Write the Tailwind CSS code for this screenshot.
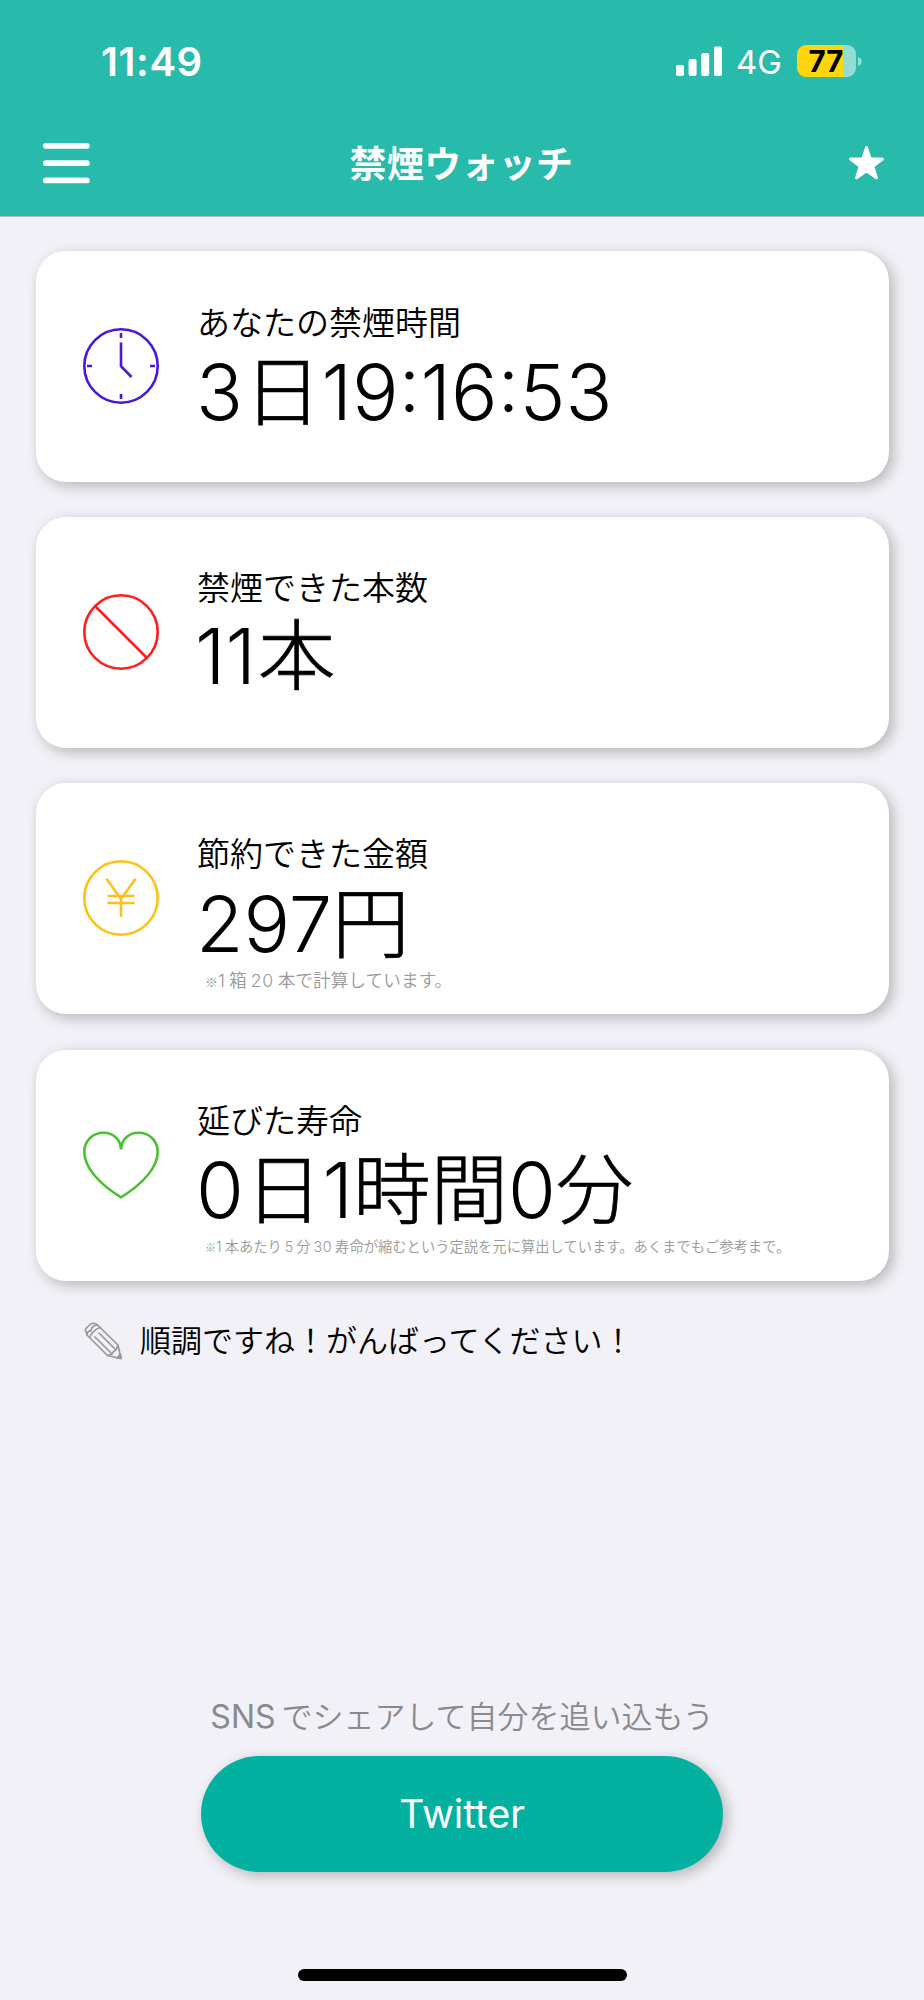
<!DOCTYPE html>
<html lang="ja">
<head>
<meta charset="utf-8">
<title>禁煙ウォッチ</title>
<script src="https://cdn.jsdelivr.net/npm/@tailwindcss/browser@4"></script>
</head>
<body class="w-[924px] h-[2000px] bg-[#f2f1f7] flex flex-col overflow-hidden text-black font-['Inter','Noto_Sans_CJK_JP',sans-serif]">
<header class="h-[217px] shrink-0 bg-[#28baab] border-b border-[#b5b9be] flex flex-col text-white">
  <div class="h-[120px] pl-[101px] pr-[62px] pt-[36px] flex items-start justify-between">
    <span class="text-[40px] leading-[52px] font-semibold tracking-[0.6px]">11:49</span>
    <div class="flex items-start">
      <svg class="w-[46px] h-[30px] mt-[10px]" viewBox="0 0 46 30" fill="#fff"><rect x="0" y="19" width="8" height="11" rx="2"/><rect x="12.6" y="13" width="8" height="17" rx="2"/><rect x="25.2" y="7" width="8" height="23" rx="2"/><rect x="38" y="0.5" width="8" height="29.5" rx="2"/></svg>
      <span class="ml-[14px] w-[46px] text-[33px] leading-[53px] whitespace-nowrap">4G</span>
      <div class="ml-[15px] mt-[9px] w-[59px] h-[32px] rounded-[9px] bg-linear-to-r from-[#ffd60a] from-78% to-[#94ddd5] to-78% flex items-center justify-center text-black text-[29.500px] leading-[32px] font-bold"><span class="-ml-[1px]">77</span></div>
      <svg class="ml-[2px] mt-[20px] w-[4px] h-[11px]" viewBox="0 0 4 11"><path d="M0 1C5 2.500 5 8.500 0 10Z" fill="#94ddd5"/></svg>
    </div>
  </div>
  <div class="h-[95px] pl-[43px] pr-[40px] pt-[16px] flex items-start justify-between">
    <svg class="w-[47px] h-[41px] mt-[6.500px]" viewBox="0 0 47 41" fill="#fff"><rect width="46.700" height="5.700" rx="2.850"/><rect y="17.300" width="46.700" height="5.700" rx="2.850"/><rect y="34.600" width="46.700" height="5.700" rx="2.850"/></svg>
    <h1 class="mt-[2px] mr-[16px] text-[37px] leading-[54px] font-bold tracking-[0.3px]">禁煙ウォッチ</h1>
    <svg class="w-[35px] h-[34px] mt-[10px]" viewBox="0 0 35 34" fill="#fff" stroke="#fff" stroke-width="3" stroke-linejoin="round"><path d="M17.500 1.600L21.300 13H33.400L23.800 20.200L27.400 31.800L17.500 24.800L7.600 31.800L11.200 20.200L1.600 13H13.700Z"/></svg>
  </div>
</header>
<main class="px-[35.500px] pt-[34px] flex flex-col gap-[35.200px]">
  <section class="h-[231px] shrink-0 rounded-[30px] bg-white shadow-[4px_4px_14px_rgba(0,0,0,0.25)] flex pl-[47px]">
    <svg class="w-[76px] h-[76px] mt-[77px]" viewBox="0 0 76 76" fill="none" stroke="#4a18dc" stroke-width="2.600"><circle cx="38" cy="38" r="36.700"/><path d="M38 14.500V38.200L48.500 49M38 5V10M38 66V71M4 38H9M67 38H72"/></svg>
    <div class="ml-[38.500px] pt-[52px]">
      <h2 class="text-[33px] leading-[40px] font-[350]">あなたの禁煙時間</h2>
      <p class="mt-[9px] -ml-[1px] text-[77.500px] leading-[80px] font-light whitespace-nowrap">3<span class="ml-[1px] [-webkit-text-stroke:0.7px_#000]">日</span>19:16:53</p>
    </div>
  </section>
  <section class="h-[231px] shrink-0 rounded-[30px] bg-white shadow-[4px_4px_14px_rgba(0,0,0,0.25)] flex pl-[47px]">
    <svg class="w-[76px] h-[76px] mt-[77px]" viewBox="0 0 76 76" fill="none" stroke="#ff1f1f" stroke-width="2.600"><circle cx="38" cy="38" r="36.700"/><path d="M12 12L64 64"/></svg>
    <div class="ml-[38.500px] pt-[51px]">
      <h2 class="text-[33px] leading-[40px] font-[350]">禁煙できた本数</h2>
      <p class="mt-[8px] -ml-[2px] text-[77.500px] leading-[80px] font-light whitespace-nowrap">11<span class="ml-[2px] [-webkit-text-stroke:0.7px_#000]">本</span></p>
    </div>
  </section>
  <section class="h-[231px] shrink-0 rounded-[30px] bg-white shadow-[4px_4px_14px_rgba(0,0,0,0.25)] flex pl-[47px]">
    <svg class="w-[76px] h-[76px] mt-[77px]" viewBox="0 0 76 76" fill="none" stroke="#fdc217" stroke-width="2.600" stroke-linecap="round"><circle cx="38" cy="38" r="36.700"/><path d="M24 19.500L38 39L52 19.500M38 39V56M25.500 36H50.500M25.500 43H50.500"/></svg>
    <div class="ml-[38.500px] pt-[51px]">
      <h2 class="text-[33px] leading-[40px] font-[350]">節約できた金額</h2>
      <p class="mt-[10px] -ml-[1px] text-[77.500px] leading-[80px] font-light whitespace-nowrap">297<span class="[-webkit-text-stroke:0.7px_#000]">円</span></p>
      <p class="mt-[5px] ml-[8px] text-[17.700px] leading-[24px] text-[#999] whitespace-nowrap font-[350]"><span class="font-['Noto_Sans_CJK_JP'] font-normal text-[13px]">※</span>1<span class="mx-[4px]">箱</span><span class="tracking-[0.6px]">20</span><span class="ml-[4px]">本で計算しています。</span></p>
    </div>
  </section>
  <section class="h-[231px] shrink-0 rounded-[30px] bg-white shadow-[4px_4px_14px_rgba(0,0,0,0.25)] flex pl-[47px]">
    <svg class="w-[76px] h-[76px] mt-[77px]" viewBox="0 0 76 76" fill="none" stroke="#4bc032" stroke-width="2.600"><path d="M38 22.500C37.500 12 30 5.800 20.500 5.800C9.500 5.800 1.300 14 1.300 25C1.300 40 16 57 38 70.300C60 57 74.700 40 74.700 25C74.700 14 66.500 5.800 55.500 5.800C46 5.800 38.500 12 38 22.500Z"/></svg>
    <div class="ml-[38.500px] pt-[51px]">
      <h2 class="text-[33px] leading-[40px] font-[350]">延びた寿命</h2>
      <p class="mt-[9px] -ml-[1px] text-[77.500px] leading-[80px] font-light whitespace-nowrap">0<span class="ml-[1px] [-webkit-text-stroke:0.7px_#000]">日</span>1<span class="[-webkit-text-stroke:0.7px_#000]">時間</span>0<span class="[-webkit-text-stroke:0.7px_#000]">分</span></p>
      <p class="mt-[5px] ml-[8px] text-[14.300px] leading-[24px] text-[#999] whitespace-nowrap font-[350]"><span class="font-['Noto_Sans_CJK_JP'] font-normal text-[11px]">※</span>1<span class="mx-[3px]">本あたり</span>5<span class="mx-[3px]">分</span><span class="tracking-[0.5px]">30</span><span class="ml-[3px]">寿命が縮むという定説を元に算出しています。あくまでもご参考まで。</span></p>
    </div>
  </section>
</main>
<div class="mt-[38px] pl-[84px] flex items-center gap-[18px] h-[44px]">
  <svg class="w-[38px] h-[38px]" viewBox="0 0 38 38" fill="none" stroke="#98989c" stroke-width="1.700" stroke-linejoin="round"><path d="M2 9.500Q1 8 2 6.500L6.500 2Q8 1 11 1.500L13.500 3L34 23L37 36.500L23.500 33.500L3 13Z"/><path d="M3 13C3 10 5 8.500 7 9C7 5.500 9.500 3.500 13.500 3M6 15C6.500 12 12 6.500 16 5.500M10.500 14.500L28 32M14.500 10.500L32 28M23.500 33.500L28 32L29.500 29.500L32 28L34 23"/><path d="M33 36L37 36.500L36.500 32Z" fill="#98989c"/></svg>
  <p class="text-[31px] leading-[44px] font-[350] whitespace-nowrap">順調ですね！がんばってください！</p>
</div>
<footer class="mt-auto flex flex-col items-center">
  <p class="text-[31px] leading-[44px] font-[350] text-[#8a8a8e] whitespace-nowrap"><span class="text-[32px] font-normal mr-[6px]">SNS</span>でシェアして自分を追い込もう</p>
  <button class="mt-[17px] w-[522px] h-[116px] rounded-full bg-[#04b09f] text-white text-[39px] shadow-[4px_4px_14px_rgba(0,0,0,0.25)]">Twitter</button>
  <div class="mt-[97px] mb-[19px] w-[329px] h-[12px] rounded-full bg-black"></div>
</footer>
</body>
</html>
